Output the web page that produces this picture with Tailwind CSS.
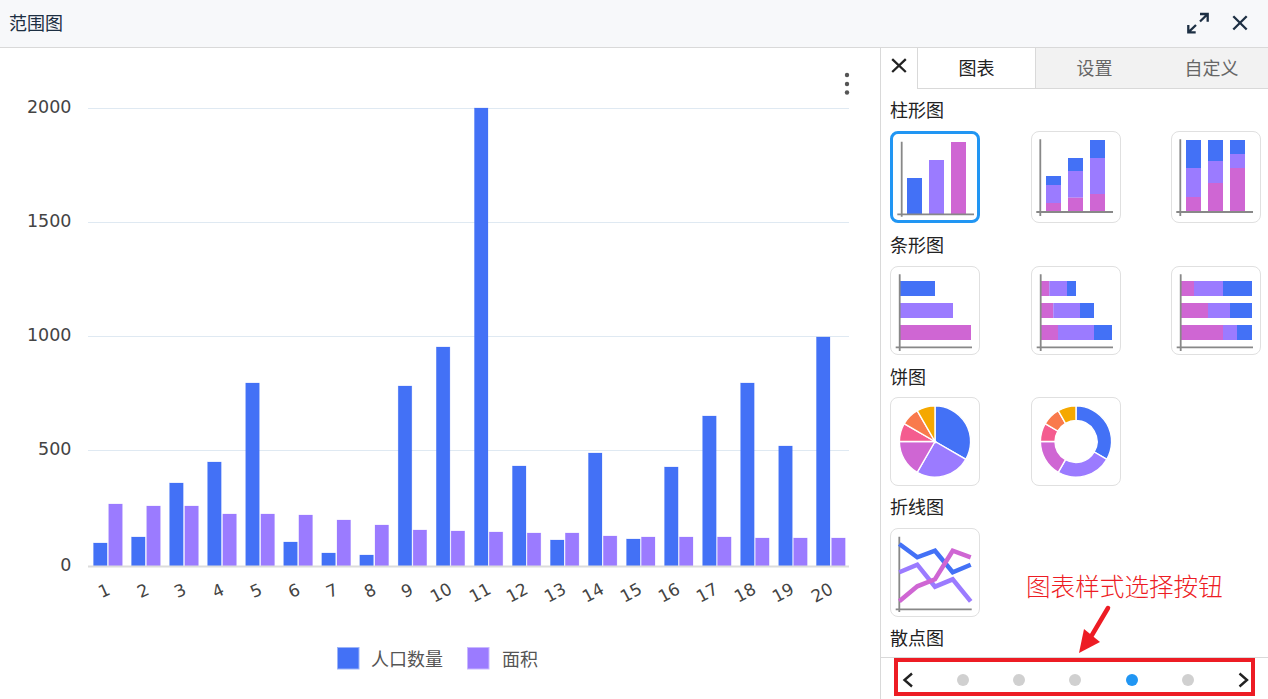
<!DOCTYPE html>
<html lang="zh">
<head>
<meta charset="utf-8">
<script src="https://cdn.jsdelivr.net/npm/@tailwindcss/browser@4"></script>
<title>范围图</title>
</head>
<body class="m-0">
<div class="relative w-[1268px] h-[699px] overflow-hidden bg-white flex flex-col font-['Noto_Sans_CJK_SC',sans-serif]">
  <header class="h-[48px] shrink-0 bg-[#f7f8fa] border-b border-[#d9d9d9] flex items-center pl-[9px] pr-[18px]">
    <h1 class="flex-1 text-[18px] font-normal text-[#1d2f43] pb-[2px]">范围图</h1>
    <svg class="w-[24px] h-[24px] mr-[20px] -mt-[1px]" viewBox="0 0 24 24" fill="none" stroke="#1d2f43" stroke-width="2.3"><path d="M2.3 14V21.3H9.7M2.3 21.3L10 14M14 3H21.7V10.7M21.7 3L14 10.5"/></svg>
    <svg class="w-[20px] h-[20px] -mt-[2px]" viewBox="0 0 20 20" fill="none" stroke="#1d2f43" stroke-width="2.3"><path d="M3.3 3.2L16.7 16.5M16.7 3.2L3.3 16.5"/></svg>
  </header>
  <main class="flex flex-1 min-h-0">
    <section class="relative w-[880px] shrink-0">
      <svg class="block w-[880px] h-[651px]" viewBox="0 48 880 651">
        <g stroke="#dfe9f2" stroke-width="1">
          <line x1="88" x2="849" y1="108.5" y2="108.5"/>
          <line x1="88" x2="849" y1="222.5" y2="222.5"/>
          <line x1="88" x2="849" y1="336.5" y2="336.5"/>
          <line x1="88" x2="849" y1="450.5" y2="450.5"/>
        </g>
        <g fill="#4371f6" stroke="#4371f6" stroke-opacity=".35" stroke-width=".6">
          <rect x="93.5" y="543" width="13.6" height="23"/>
          <rect x="131.5" y="537" width="13.6" height="29"/>
          <rect x="169.6" y="483" width="13.6" height="83"/>
          <rect x="207.6" y="462" width="13.6" height="104"/>
          <rect x="245.7" y="383" width="13.6" height="183"/>
          <rect x="283.7" y="542" width="13.6" height="24"/>
          <rect x="321.8" y="553" width="13.6" height="13"/>
          <rect x="359.8" y="555" width="13.6" height="11"/>
          <rect x="398.2" y="386" width="13.6" height="180"/>
          <rect x="436.3" y="347" width="13.6" height="219"/>
          <rect x="474.4" y="108" width="13.6" height="458"/>
          <rect x="512.4" y="466" width="13.6" height="100"/>
          <rect x="550.4" y="540" width="13.6" height="26"/>
          <rect x="588.4" y="453" width="13.6" height="113"/>
          <rect x="626.5" y="539" width="13.6" height="27"/>
          <rect x="664.5" y="467" width="13.6" height="99"/>
          <rect x="702.6" y="416" width="13.6" height="150"/>
          <rect x="740.6" y="383" width="13.6" height="183"/>
          <rect x="778.7" y="446" width="13.6" height="120"/>
          <rect x="816.4" y="337" width="13.6" height="229"/>
        </g>
        <g fill="#9b7bff" stroke="#9b7bff" stroke-opacity=".35" stroke-width=".6">
          <rect x="108.7" y="504" width="13.6" height="62"/>
          <rect x="146.7" y="506" width="13.6" height="60"/>
          <rect x="184.8" y="506" width="13.6" height="60"/>
          <rect x="222.8" y="514" width="13.6" height="52"/>
          <rect x="260.9" y="514" width="13.6" height="52"/>
          <rect x="298.9" y="515" width="13.6" height="51"/>
          <rect x="337" y="520" width="13.6" height="46"/>
          <rect x="375" y="525" width="13.6" height="41"/>
          <rect x="413.1" y="530" width="13.6" height="36"/>
          <rect x="451.1" y="531" width="13.6" height="35"/>
          <rect x="489.2" y="532" width="13.6" height="34"/>
          <rect x="527.2" y="533" width="13.6" height="33"/>
          <rect x="565.3" y="533" width="13.6" height="33"/>
          <rect x="603.3" y="536" width="13.6" height="30"/>
          <rect x="641.4" y="537" width="13.6" height="29"/>
          <rect x="679.4" y="537" width="13.6" height="29"/>
          <rect x="717.5" y="537" width="13.6" height="29"/>
          <rect x="755.5" y="538" width="13.6" height="28"/>
          <rect x="793.6" y="538" width="13.6" height="28"/>
          <rect x="831.6" y="538" width="13.6" height="28"/>
        </g>
        <line x1="88" x2="849" y1="566.5" y2="566.5" stroke="#dcdcdc" stroke-width="2"/>
        <g class="font-['DejaVu_Sans',sans-serif] text-[17.5px]" fill="#444" text-anchor="end">
          <text x="71.5" y="113">2000</text>
          <text x="71.5" y="227">1500</text>
          <text x="71.5" y="341">1000</text>
          <text x="71.5" y="455">500</text>
          <text x="71.5" y="571">0</text>
        </g>
        <g class="font-['DejaVu_Sans',sans-serif] text-[17px]" fill="#444" text-anchor="middle">
          <text x="104" y="596.5" transform="rotate(-24 104 590.5)">1</text>
          <text x="143" y="596.5" transform="rotate(-24 143 590.5)">2</text>
          <text x="180" y="596.5" transform="rotate(-24 180 590.5)">3</text>
          <text x="218" y="596.5" transform="rotate(-24 218 590.5)">4</text>
          <text x="256" y="596.5" transform="rotate(-24 256 590.5)">5</text>
          <text x="294" y="596.5" transform="rotate(-24 294 590.5)">6</text>
          <text x="332" y="596.5" transform="rotate(-24 332 590.5)">7</text>
          <text x="370" y="596.5" transform="rotate(-24 370 590.5)">8</text>
          <text x="407" y="596.5" transform="rotate(-24 407 590.5)">9</text>
          <text x="441" y="598.5" transform="rotate(-28 441 592.5)">10</text>
          <text x="480" y="598.5" transform="rotate(-28 480 592.5)">11</text>
          <text x="517" y="598.5" transform="rotate(-28 517 592.5)">12</text>
          <text x="555" y="598.5" transform="rotate(-28 555 592.5)">13</text>
          <text x="593" y="598.5" transform="rotate(-28 593 592.5)">14</text>
          <text x="631" y="598.5" transform="rotate(-28 631 592.5)">15</text>
          <text x="669" y="598.5" transform="rotate(-28 669 592.5)">16</text>
          <text x="707" y="598.5" transform="rotate(-28 707 592.5)">17</text>
          <text x="745" y="598.5" transform="rotate(-28 745 592.5)">18</text>
          <text x="783" y="598.5" transform="rotate(-28 783 592.5)">19</text>
          <text x="822" y="598.5" transform="rotate(-28 822 592.5)">20</text>
        </g>
        <g fill="#555"><circle cx="847" cy="75" r="2.2"/><circle cx="847" cy="84" r="2.2"/><circle cx="847" cy="92.5" r="2.2"/></g>
        <rect x="337.5" y="647.5" width="21.5" height="21.5" fill="#4371f6" stroke="#9db4f8"/>
        <text x="371" y="666" class="text-[18px]" fill="#555">人口数量</text>
        <rect x="467.5" y="647.5" width="21.5" height="21.5" fill="#9b7bff" stroke="#c9b8ff"/>
        <text x="502" y="666" class="text-[18px]" fill="#555">面积</text>
      </svg>
    </section>

    <aside class="w-[388px] shrink-0 border-l border-[#d9d9d9] flex flex-col min-h-0">
      <nav class="h-[41px] shrink-0 flex text-[18px]">
        <div class="w-[36px] flex items-start justify-center pt-[9px]">
          <svg class="w-[18px] h-[18px]" viewBox="0 0 18 18" fill="none" stroke="#222" stroke-width="2.3"><path d="M2.2 2.2L15.8 15M15.8 2.2L2.2 15"/></svg>
        </div>
        <div class="w-[119px] border-x border-b border-[#d9d9d9] bg-white text-[#222] flex items-center justify-center pb-[2px]">图表</div>
        <div class="w-[117px] border-b border-[#d9d9d9] bg-[#f2f2f2] text-[#666] flex items-center justify-center pb-[2px]">设置</div>
        <div class="flex-1 border-b border-[#d9d9d9] bg-[#f2f2f2] text-[#666] flex items-center justify-center pl-[2px] pb-[2px]">自定义</div>
      </nav>

      <div class="flex-1 min-h-0 overflow-hidden pl-[9px] pr-[7px] text-[18px] text-[#222]">
        <h2 class="h-[42px] flex items-center font-normal text-[18px] pb-[2px]">柱形图</h2>
        <div class="grid grid-cols-[repeat(3,90px)] justify-between">
          <div class="h-[92px] rounded-[8px] border-[3px] border-[#2196f3]">
            <svg class="block -m-[3px] w-[90px] h-[92px] overflow-visible" viewBox="0 0 90 92">
              <rect x="17" y="47" width="15" height="36" fill="#4371f6"/><rect x="39" y="29" width="15" height="54" fill="#9b7bff"/><rect x="61" y="11" width="15" height="72" fill="#cf66d3"/>
              <path d="M11.7 10.7V85.7M7.3 83.3H84" stroke="#888" stroke-width="1.8" fill="none"/>
            </svg>
          </div>
          <div class="h-[92px] rounded-[8px] border border-[#e0e0e0]">
            <svg class="block -m-px w-[90px] h-[92px] overflow-visible" viewBox="0 0 90 92">
              <rect x="15" y="45" width="15" height="9" fill="#4371f6"/><rect x="15" y="54" width="15" height="18" fill="#9b7bff"/><rect x="15" y="72" width="15" height="9" fill="#cf66d3"/>
              <rect x="37" y="27" width="15" height="13" fill="#4371f6"/><rect x="37" y="40" width="15" height="26.7" fill="#9b7bff"/><rect x="37" y="66.7" width="15" height="14.3" fill="#cf66d3"/>
              <rect x="59" y="9" width="15" height="18" fill="#4371f6"/><rect x="59" y="27" width="15" height="36" fill="#9b7bff"/><rect x="59" y="63" width="15" height="18" fill="#cf66d3"/>
              <path d="M9.3 8.3V85M5.3 81H82" stroke="#888" stroke-width="1.8" fill="none"/>
            </svg>
          </div>
          <div class="h-[92px] rounded-[8px] border border-[#e0e0e0]">
            <svg class="block -m-px w-[90px] h-[92px] overflow-visible" viewBox="0 0 90 92">
              <rect x="15" y="9" width="15" height="28" fill="#4371f6"/><rect x="15" y="37" width="15" height="29" fill="#9b7bff"/><rect x="15" y="66" width="15" height="15" fill="#cf66d3"/>
              <rect x="37" y="9" width="15" height="21" fill="#4371f6"/><rect x="37" y="30" width="15" height="22" fill="#9b7bff"/><rect x="37" y="52" width="15" height="29" fill="#cf66d3"/>
              <rect x="59" y="9" width="15" height="14" fill="#4371f6"/><rect x="59" y="23" width="15" height="14" fill="#9b7bff"/><rect x="59" y="37" width="15" height="44" fill="#cf66d3"/>
              <path d="M9.3 8.3V85M5.3 81H82" stroke="#888" stroke-width="1.8" fill="none"/>
            </svg>
          </div>
        </div>

        <h2 class="h-[43px] flex items-center font-normal text-[18px] pb-[1px]">条形图</h2>
        <div class="grid grid-cols-[repeat(3,90px)] justify-between">
          <div class="h-[89px] rounded-[8px] border border-[#e0e0e0]">
            <svg class="block -m-px w-[90px] h-[89px] overflow-visible" viewBox="0 0 90 89">
              <rect x="10" y="15" width="35" height="15" fill="#4371f6"/><rect x="10" y="37" width="53" height="15" fill="#9b7bff"/><rect x="10" y="59" width="71" height="15" fill="#cf66d3"/>
              <path d="M9.7 8.3V85M5.7 81.3H82" stroke="#888" stroke-width="1.8" fill="none"/>
            </svg>
          </div>
          <div class="h-[89px] rounded-[8px] border border-[#e0e0e0]">
            <svg class="block -m-px w-[90px] h-[89px] overflow-visible" viewBox="0 0 90 89">
              <rect x="10" y="15" width="8.3" height="15" fill="#cf66d3"/><rect x="18.3" y="15" width="17.7" height="15" fill="#9b7bff"/><rect x="36" y="15" width="9" height="15" fill="#4371f6"/>
              <rect x="10" y="37" width="12.3" height="15" fill="#cf66d3"/><rect x="22.3" y="37" width="26.7" height="15" fill="#9b7bff"/><rect x="49" y="37" width="14" height="15" fill="#4371f6"/>
              <rect x="10" y="59" width="17" height="15" fill="#cf66d3"/><rect x="27" y="59" width="36" height="15" fill="#9b7bff"/><rect x="63" y="59" width="18" height="15" fill="#4371f6"/>
              <path d="M9.7 8.3V85M5.7 81.3H82" stroke="#888" stroke-width="1.8" fill="none"/>
            </svg>
          </div>
          <div class="h-[89px] rounded-[8px] border border-[#e0e0e0]">
            <svg class="block -m-px w-[90px] h-[89px] overflow-visible" viewBox="0 0 90 89">
              <rect x="10" y="15" width="13" height="15" fill="#cf66d3"/><rect x="23" y="15" width="29" height="15" fill="#9b7bff"/><rect x="52" y="15" width="29" height="15" fill="#4371f6"/>
              <rect x="10" y="37" width="27" height="15" fill="#cf66d3"/><rect x="37" y="37" width="22" height="15" fill="#9b7bff"/><rect x="59" y="37" width="22" height="15" fill="#4371f6"/>
              <rect x="10" y="59" width="42" height="15" fill="#cf66d3"/><rect x="52" y="59" width="14" height="15" fill="#9b7bff"/><rect x="66" y="59" width="15" height="15" fill="#4371f6"/>
              <path d="M9.7 8.3V85M5.7 81.3H82" stroke="#888" stroke-width="1.8" fill="none"/>
            </svg>
          </div>
        </div>

        <h2 class="h-[42px] flex items-center font-normal text-[18px]">饼图</h2>
        <div class="grid grid-cols-[repeat(3,90px)] justify-between">
          <div class="h-[89px] rounded-[8px] border border-[#e0e0e0]">
            <svg class="block -m-px w-[90px] h-[89px] overflow-visible" viewBox="0 0 90 89" stroke="#fff" stroke-width="1.4">
              <path d="M45 44.5V8.9A35.6 35.6 0 0 1 75.83 62.3Z" fill="#4371f6"/>
              <path d="M45 44.5L75.83 62.3A35.6 35.6 0 0 1 27.2 75.33Z" fill="#9b7bff"/>
              <path d="M45 44.5L27.2 75.33A35.6 35.6 0 0 1 9.4 44.5Z" fill="#cf66d3"/>
              <path d="M45 44.5H9.4A35.6 35.6 0 0 1 14.17 26.7Z" fill="#f45c8f"/>
              <path d="M45 44.5L14.17 26.7A35.6 35.6 0 0 1 27.2 13.67Z" fill="#f97a4c"/>
              <path d="M45 44.5L27.2 13.67A35.6 35.6 0 0 1 45 8.9Z" fill="#f5a800"/>
            </svg>
          </div>
          <div class="h-[89px] rounded-[8px] border border-[#e0e0e0]">
            <svg class="block -m-px w-[90px] h-[89px] overflow-visible" viewBox="0 0 90 89" stroke="#fff" stroke-width="1.4">
              <path d="M45 8.9A35.6 35.6 0 0 1 75.83 62.3L63.19 55A21 21 0 0 0 45 23.5Z" fill="#4371f6"/>
              <path d="M75.83 62.3A35.6 35.6 0 0 1 27.2 75.33L34.5 62.69A21 21 0 0 0 63.19 55Z" fill="#9b7bff"/>
              <path d="M27.2 75.33A35.6 35.6 0 0 1 9.4 44.5H24A21 21 0 0 0 34.5 62.69Z" fill="#cf66d3"/>
              <path d="M9.4 44.5A35.6 35.6 0 0 1 14.17 26.7L26.81 34A21 21 0 0 0 24 44.5Z" fill="#f45c8f"/>
              <path d="M14.17 26.7A35.6 35.6 0 0 1 27.2 13.67L34.5 26.31A21 21 0 0 0 26.81 34Z" fill="#f97a4c"/>
              <path d="M27.2 13.67A35.6 35.6 0 0 1 45 8.9V23.5A21 21 0 0 0 34.5 26.31Z" fill="#f5a800"/>
            </svg>
          </div>
        </div>

        <h2 class="h-[42px] flex items-center font-normal text-[18px] pb-[2px]">折线图</h2>
        <div class="grid grid-cols-[repeat(3,90px)] justify-between">
          <div class="h-[89px] rounded-[8px] border border-[#e0e0e0]">
            <svg class="block -m-px w-[90px] h-[89px] overflow-visible" viewBox="0 0 90 89" fill="none">
              <path d="M9.3 8.7V84M5.7 81.3H81.7" stroke="#888" stroke-width="1.8"/>
              <polyline points="9.3,16 27.3,29.3 45,22.7 62.7,44.3 80.7,36.7" stroke="#4371f6" stroke-width="4.5"/>
              <polyline points="9.3,44.3 27.3,36.7 45,58.7 62.7,51.3 80.7,73.3" stroke="#9b7bff" stroke-width="4.5"/>
              <polyline points="9.3,73.3 27.3,58.3 45,51.3 62.7,22.7 80.7,29.3" stroke="#cf66d3" stroke-width="4.5"/>
            </svg>
          </div>
        </div>

        <h2 class="h-[42px] flex items-center font-normal text-[18px] pb-[2px]">散点图</h2>
      </div>

      <footer class="h-[42px] shrink-0 border-t border-[#d9d9d9] flex items-center justify-between pl-[21px] pr-[19px] pt-[3px]">
        <svg class="w-[11px] h-[16px]" viewBox="0 0 11 16" fill="none" stroke="#222" stroke-width="2.4"><path d="M10 1.5L2.5 8L10 14.5"/></svg>
        <span class="w-[12px] h-[12px] rounded-full bg-[#d0d0d0]"></span>
        <span class="w-[12px] h-[12px] rounded-full bg-[#d0d0d0]"></span>
        <span class="w-[12px] h-[12px] rounded-full bg-[#d0d0d0]"></span>
        <span class="w-[12px] h-[12px] rounded-full bg-[#2196f3]"></span>
        <span class="w-[12px] h-[12px] rounded-full bg-[#d0d0d0]"></span>
        <svg class="w-[11px] h-[16px]" viewBox="0 0 11 16" fill="none" stroke="#222" stroke-width="2.4"><path d="M1.5 1.5L9 8L1.5 14.5"/></svg>
      </footer>
    </aside>
  </main>

  <div class="absolute left-[894px] top-[658px] w-[361px] h-[38px] border-[4px] border-[#ed1c24]"></div>
  <div class="absolute left-[1026px] top-[567px] text-[24.6px] leading-[36px] font-light whitespace-nowrap text-[#ed1c24]">图表样式选择按钮</div>
  <svg class="absolute left-[1070px] top-[600px] w-[50px] h-[60px]" viewBox="1070 600 50 60" fill="#ed1c24">
    <path d="M1108 608L1092 635" stroke="#ed1c24" stroke-width="4.5" stroke-linecap="round"/>
    <path d="M1079 653L1084 629L1100 642Z"/>
  </svg>
</div>
</body>
</html>
